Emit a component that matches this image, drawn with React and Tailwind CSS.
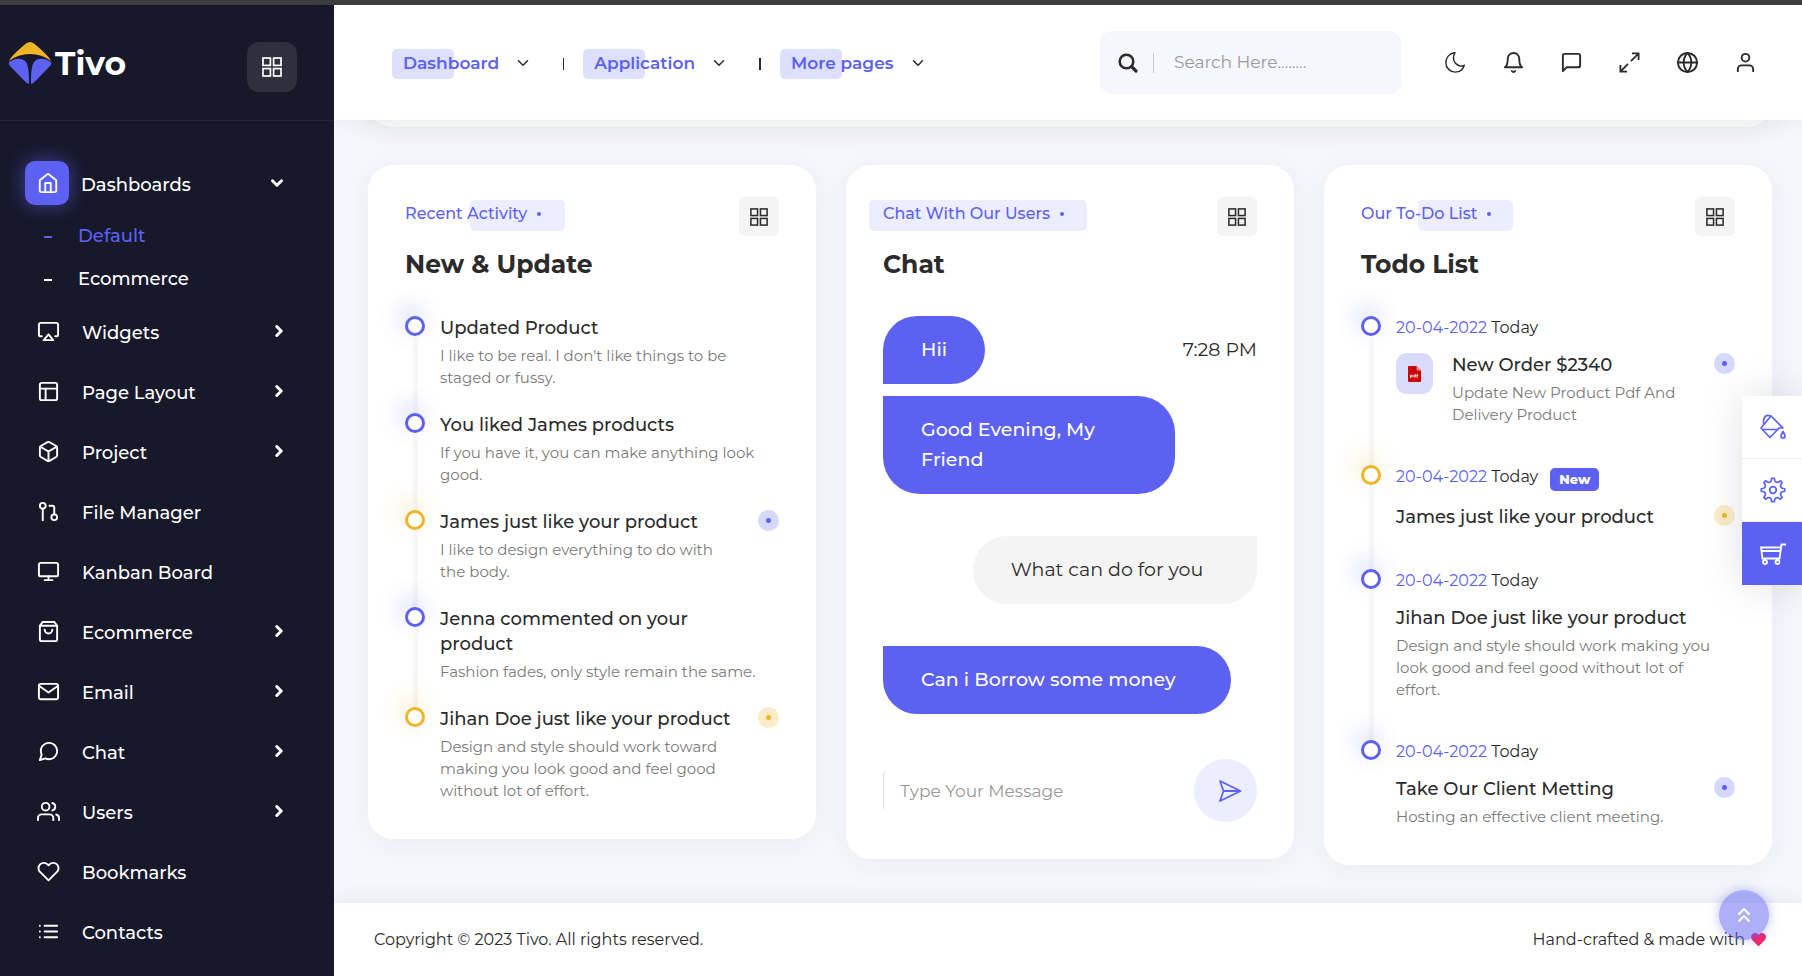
import React from "react";
import {
  FiHome, FiAirplay, FiLayout, FiBox, FiGitPullRequest, FiMonitor, FiShoppingBag, FiMail,
  FiMessageCircle, FiUsers, FiHeart, FiList, FiChevronRight, FiChevronDown, FiBell,
  FiMessageSquare, FiGlobe, FiUser, FiChevronsUp,
} from "react-icons/fi";
import { FaHeart } from "react-icons/fa";

const nav = [
  { label: "Widgets", icon: FiAirplay, more: true },
  { label: "Page Layout", icon: FiLayout, more: true },
  { label: "Project", icon: FiBox, more: true },
  { label: "File Manager", icon: FiGitPullRequest },
  { label: "Kanban Board", icon: FiMonitor },
  { label: "Ecommerce", icon: FiShoppingBag, more: true },
  { label: "Email", icon: FiMail, more: true },
  { label: "Chat", icon: FiMessageCircle, more: true },
  { label: "Users", icon: FiUsers, more: true },
  { label: "Bookmarks", icon: FiHeart },
  { label: "Contacts", icon: FiList },
];

// Outline of an eight-toothed cog centred on (13, 13).
function cogPath() {
  const point = (radius, degrees) => {
    const angle = (degrees * Math.PI) / 180;
    return (13 + radius * Math.cos(angle)).toFixed(2) + " " + (13 + radius * Math.sin(angle)).toFixed(2);
  };
  let path = "";
  for (let tooth = 0; tooth < 8; tooth += 1) {
    const a = tooth * 45;
    path += (tooth === 0 ? "M" : "L") + point(11.8, a - 6) + "L" + point(11.8, a + 6) + "L" + point(9.4, a + 11);
    path += "Q" + point(7.6, a + 22.5) + " " + point(9.4, a + 34);
  }
  return path + "Z";
}

function GridIcon({ className }) {
  return (
    <svg viewBox="0 0 20 20" className={className} fill="none" stroke="currentColor" strokeWidth="1.7" aria-hidden="true">
      <rect x="1" y="1" width="7.400" height="7.400" />
      <rect x="11.600" y="1" width="7.400" height="7.400" />
      <rect x="1" y="11.600" width="7.400" height="7.400" />
      <rect x="11.600" y="11.600" width="7.400" height="7.400" />
    </svg>
  );
}

function Logo() {
  return (
    <a href="#home" className="flex items-center gap-[3px]" aria-label="Tivo">
      <svg viewBox="0 0 44 44" className="size-11" aria-hidden="true">
        <path d="M1 20 Q3 15 18 2.5 Q22 -0.5 26 2.5 Q41 15 43 20 Q34 13 22 13 Q10 13 1 20Z" fill="#f0b429" />
        <path d="M1 21 C7 16.500 15 16.500 18 21 C20.500 25 21 31 21 43 Q19 42.500 16 39.500 L3 26 Q0 23.500 1 21Z" fill="#5c61f2" />
        <path d="M43 21 C37 16.500 29 16.500 26 21 C23.500 25 23 31 23 43 Q25 42.500 28 39.500 L41 26 Q44 23.500 43 21Z" fill="#5c61f2" />
      </svg>
      <span className="text-[33px] leading-[44px] font-bold text-white">Tivo</span>
    </a>
  );
}

function Sidebar() {
  return (
    <aside className="relative z-20 w-[334px] shrink-0 bg-[#17182a] text-white">
      <div className="flex h-[116px] items-center justify-between border-b border-[#262738] pr-[37px] pl-2">
        <Logo />
        <button type="button" aria-label="Toggle sidebar" className="mt-2 flex size-[50px] items-center justify-center rounded-xl bg-[#2e2f3f]">
          <GridIcon className="size-5" />
        </button>
      </div>
      <nav className="pt-8 text-[18px] font-medium">
        <a href="#dashboards" className="flex h-[60px] items-center gap-3 pr-[48px] pl-[25px]">
          <span className="flex size-11 items-center justify-center rounded-[10px] bg-[#5c61f2] pl-0.5 shadow-[0_0_20px_rgba(92,97,242,0.6)]">
            <FiHome className="size-[22px]" />
          </span>
          <span className="grow pt-1">Dashboards</span>
          <FiChevronDown className="size-[18px]" strokeWidth={4} />
        </a>
        <ul className="pt-0.5">
          <li>
            <a href="#default" className="flex h-[43px] items-center gap-[26px] pl-11 text-[#5c61f2]">
              <span className="h-0.5 w-2 bg-current" />Default
            </a>
          </li>
          <li>
            <a href="#ecommerce" className="flex h-[43px] items-center gap-[26px] pl-11">
              <span className="h-0.5 w-2 bg-current" />Ecommerce
            </a>
          </li>
        </ul>
        <ul>
          {nav.map(({ label, icon: Icon, more }) => (
            <li key={label}>
              <a href="#page" className="flex h-[60px] items-center gap-[22px] pr-[46px] pl-[37px]">
                <Icon className="size-[23px]" />
                <span className="grow pt-1">{label}</span>
                {more && <FiChevronRight className="size-[18px]" strokeWidth={4} />}
              </a>
            </li>
          ))}
        </ul>
      </nav>
    </aside>
  );
}

function TopLink({ children }) {
  return (
    <button type="button" className="relative flex items-center gap-[15px] pb-0.5 pl-[11px] text-[17px] leading-7 font-semibold text-[#5c61f2]">
      <span className="absolute inset-y-0 left-0 w-[62px] rounded-[5px] bg-[#dedffc]" />
      <span className="relative">{children}</span>
      <FiChevronDown className="size-[18px] text-[#2b2b2b]" />
    </button>
  );
}

function Header() {
  return (
    <header className="relative z-10 flex h-[115px] items-center bg-white pr-[45px] pl-[58px] shadow-[0_0_20px_rgba(89,102,122,0.1)]">
      <div className="flex items-center gap-[19px] pt-0.5">
        <TopLink>Dashboard</TopLink>
        <span className="ml-3 h-3 w-px bg-[#2b2b2b]" />
        <TopLink>Application</TopLink>
        <span className="ml-3 h-3 w-0.5 bg-[#2b2b2b]" />
        <TopLink>More pages</TopLink>
      </div>
      <div className="ml-auto flex items-center gap-[43px]">
        <label className="flex h-[63px] w-[301px] items-center rounded-xl bg-[#f6f7fc] pl-[18px]">
          <svg viewBox="0 0 20 20" className="size-5 shrink-0" fill="none" stroke="#2b2b2b" strokeLinecap="round" aria-hidden="true">
            <circle cx="8.500" cy="8.500" r="6.800" strokeWidth="2.600" />
            <path d="M13.800 13.800 18 18" strokeWidth="3.200" />
          </svg>
          <span className="mr-5 ml-[15px] h-5 w-px shrink-0 bg-[#c9cad0]" />
          <input type="text" aria-label="Search" placeholder="Search Here........" className="w-full min-w-0 bg-transparent text-[17px] outline-none placeholder:text-[#999999]" />
        </label>
        <div className="flex items-center gap-[35px] text-[#2b2b2b]">
          <button type="button" aria-label="Dark mode">
            <svg viewBox="0 0 22 22" className="size-[23px]" fill="none" stroke="currentColor" strokeWidth="1.400" strokeLinejoin="round" aria-hidden="true">
              <path d="M10.500 1.500C5 2.500 1.800 6.500 1.800 11.200c0 5 4 9 9 9 4 0 7.400-2.600 8.600-6.500-1.800 1-5.800 1.200-8.400-1.900C8.300 8.500 8.800 4.500 10.500 1.500Z" />
            </svg>
          </button>
          <button type="button" aria-label="Notifications"><FiBell className="size-[23px]" /></button>
          <button type="button" aria-label="Messages"><FiMessageSquare className="size-[23px]" /></button>
          <button type="button" aria-label="Full screen">
            <svg viewBox="0 0 24 24" className="size-[23px]" fill="none" stroke="currentColor" strokeWidth="1.900" aria-hidden="true">
              <path d="M14.500 2.500H21.500V9.500M21 3 13.500 10.500M9.500 21.500H2.500V14.500M3 21 10.500 13.500" />
            </svg>
          </button>
          <button type="button" aria-label="Language"><FiGlobe className="size-[23px]" /></button>
          <button type="button" aria-label="Profile"><FiUser className="size-[23px]" /></button>
        </div>
      </div>
    </header>
  );
}

function Card({ label, title, highlight, children }) {
  return (
    <section className="rounded-[25px] bg-white px-[37px] pt-8 pb-[37px] shadow-[0_4px_30px_rgba(46,35,94,0.06)]">
      <div className="flex items-start justify-between">
        <p className="relative flex items-center gap-2.5 text-[16px] leading-[34px] font-medium text-[#5c61f2]">
          <span className={"absolute bottom-0 h-[31px] rounded-[5px] bg-[#ecedfe] " + highlight} />
          <span className="relative">{label}</span>
          <span className="relative size-1 rounded-full bg-current" />
        </p>
        <button type="button" aria-label={title + " options"} className="flex h-[39px] w-10 items-center justify-center rounded-md bg-[#f4f4f4] text-[#2b2b2b]">
          <GridIcon className="size-[18px]" />
        </button>
      </div>
      <h2 className="mt-3 mb-9 text-[25px] leading-8 font-bold text-[#2b2b2b]">{title}</h2>
      {children}
    </section>
  );
}

function TimelineItem({ yellow, last, spaced, children }) {
  return (
    <li className="flex gap-[15px]">
      <div className="flex w-5 shrink-0 flex-col items-center">
        <span
          className={
            "size-5 shrink-0 rounded-full border-3 bg-white " +
            (yellow
              ? "border-[#f0b429] shadow-[-4px_-8px_20px_4px_rgba(240,180,41,0.16)]"
              : "border-[#5c61f2] shadow-[-4px_-8px_20px_4px_rgba(92,97,242,0.16)]")
          }
        />
        {!last && <span className="w-[5px] grow bg-[#f7f7f7]" />}
      </div>
      <div className={"min-w-0 grow " + (last ? "" : spaced ? "pb-[39px]" : "pb-6")}>{children}</div>
    </li>
  );
}

function Lines({ items }) {
  return items.map((line, i) => (
    <React.Fragment key={line}>
      {i > 0 && <br />}
      {line}
    </React.Fragment>
  ));
}

function Entry({ title, text, dot }) {
  return (
    <div className="flex grow items-start justify-between">
      <div>
        <h3 className="text-[18px] leading-[25px] font-medium text-[#2b2b2b]"><Lines items={title} /></h3>
        {text && <p className="mt-1 text-[15px] leading-[22px] text-[#7a7a7a]"><Lines items={text} /></p>}
      </div>
      {dot && (
        <span
          className={
            "flex size-[21px] shrink-0 items-center justify-center rounded-full " +
            (dot === "yellow" ? "bg-[#fbebc9] text-[#f0b429]" : "bg-[#d6d7fc] text-[#5c61f2]")
          }
        >
          <span className="size-[5px] rounded-full bg-current" />
        </span>
      )}
    </div>
  );
}

function TodoDate({ isNew }) {
  return (
    <p className="mb-3.5 flex items-start text-[16px] leading-[23px] text-[#2b2b2b]">
      <span><span className="text-[#5c61f2]">20-04-2022</span> Today</span>
      {isNew && (
        <span className="mt-[3px] ml-3 w-[49px] rounded-[5px] bg-[#5c61f2] text-center text-[13px] leading-[23px] font-extrabold text-white">New</span>
      )}
    </p>
  );
}

function PdfIcon() {
  return (
    <span className="mr-[19px] flex h-[41px] w-[37px] shrink-0 items-center justify-center rounded-[11px] bg-[#dadafc]">
      <svg viewBox="0 0 13 16" className="h-4 w-[13px]" aria-hidden="true">
        <path d="M1 0H8.500L13 4.500V15a1 1 0 0 1-1 1H1a1 1 0 0 1-1-1V1a1 1 0 0 1 1-1Z" fill="#cc0605" />
        <path d="M8.500 0 13 4.500H9.500a1 1 0 0 1-1-1Z" fill="#f08a8a" />
        <path d="M2.500 12V9.200H4.200V10.800H2.500M7.400 8V11H5.700V9.400H7.400M9 12V9q0-.800 1-.800M8.500 9.600H10.200" fill="none" stroke="#fff" strokeWidth=".8" />
      </svg>
    </span>
  );
}

function Chat() {
  const bubble = "px-[38px] py-[19px] ";
  return (
    <Card label="Chat With Our Users" title="Chat" highlight="-left-3.5 w-[218px]">
      <div className="flex flex-col text-[19px] leading-[30px] text-[#2b2b2b]">
        <div className="flex items-center justify-between">
          <p className={bubble + "rounded-[34px] rounded-bl-none bg-[#5c61f2] font-medium text-white"}>Hii</p>
          <time className="text-[#2b2b2b]">7:28 PM</time>
        </div>
        <p className={bubble + "mt-3 w-[78%] rounded-[37px] rounded-tl-none bg-[#5c61f2] font-medium text-white"}>
          Good Evening, My<br />Friend
        </p>
        <p className={bubble + "mt-[42px] w-[76%] self-end rounded-[34px] rounded-tr-none bg-[#f4f4f4]"}>What can do for you</p>
        <p className={bubble + "mt-[42px] w-[93%] rounded-[34px] rounded-tl-none bg-[#5c61f2] font-medium text-white"}>
          Can i Borrow some money
        </p>
      </div>
      <form className="mt-[45px] flex items-center justify-between">
        <input type="text" aria-label="Message" placeholder="Type Your Message" className="h-[41px] min-w-0 grow rounded-[5px] border-l border-[#dddddd] pl-4 text-[17px] outline-none placeholder:text-[#999999]" />
        <button type="button" aria-label="Send" className="flex size-[63px] items-center justify-center rounded-full bg-[#ecedfe] text-[#5c61f2]">
          <svg viewBox="0 0 24 24" className="ml-2 size-6" fill="none" stroke="currentColor" strokeWidth="1.800" strokeLinejoin="round" aria-hidden="true">
            <path d="M2 2 22.500 12 2 22 5.500 12ZM5.500 12H22" />
          </svg>
        </button>
      </form>
    </Card>
  );
}

function SidePanel() {
  const cell = "flex h-[63px] w-full items-center justify-center pl-0.5 ";
  return (
    <div className="absolute top-[396px] right-0 z-20 w-[60px] bg-white text-[#5c61f2] shadow-[0_0_40px_rgba(89,102,122,0.2)]">
      <button type="button" aria-label="Theme colors" className={cell + "border-b border-[#eeeeee]"}>
        <svg viewBox="0 0 26 26" className="size-[26px]" fill="none" stroke="currentColor" strokeWidth="1.700" strokeLinejoin="round" aria-hidden="true">
          <path d="M11 2 23 14H19L10 23.500 1 14Z" />
          <path d="M2.500 15.500H18.500M3.800 11C2.500 5.500 4.500 1.300 8 1.300Q10 1.300 11 2.500" />
          <path d="M23 17.500q-2 3-2 4.500a2 2 0 0 0 4 0q0-1.500-2-4.500Z" />
        </svg>
      </button>
      <button type="button" aria-label="Settings" className={cell + "border-b border-[#eeeeee]"}>
        <svg viewBox="0 0 26 26" className="size-[26px]" fill="none" stroke="currentColor" strokeWidth="1.700" strokeLinejoin="round" aria-hidden="true">
          <circle cx="13" cy="13" r="3.300" />
          <path d={cogPath()} />
        </svg>
      </button>
      <button type="button" aria-label="Cart" className={cell + "bg-[#5c61f2] text-white"}>
        <svg viewBox="0 0 26 22" className="h-[22px] w-[26px]" fill="none" stroke="currentColor" strokeWidth="1.800" aria-hidden="true">
          <path d="M26 1.500H21.500L19.500 15.500H2.500L1 4.500H21M1.500 8H20.500" />
          <circle cx="5" cy="19" r="2" />
          <circle cx="17.500" cy="19" r="2" />
        </svg>
      </button>
    </div>
  );
}

export default function App() {
  return (
    <div className="relative flex min-h-screen flex-col bg-[#f6f7fc] font-['Montserrat','Inter',sans-serif] text-[#2b2b2b]">
      <div className="h-[5px] bg-[#3d3d3d]" />
      <div className="flex grow">
        <Sidebar />
        <div className="flex min-w-0 grow flex-col">
          <Header />
          <main className="grow pr-[30px] pb-[37px] pl-[34px]">
            <div className="-mt-[43px] mb-[38px] h-[50px] rounded-b-[25px] bg-[#f8faf9] shadow-[0_4px_30px_rgba(46,35,94,0.08)]" />
            <div className="grid grid-cols-3 items-start gap-[30px]">
              <Card label="Recent Activity" title="New & Update" highlight="left-[65px] w-[95px]">
                <ul>
                  <TimelineItem><Entry title={["Updated Product"]} text={["I like to be real. I don't like things to be", "staged or fussy."]} /></TimelineItem>
                  <TimelineItem><Entry title={["You liked James products"]} text={["If you have it, you can make anything look", "good."]} /></TimelineItem>
                  <TimelineItem yellow><Entry title={["James just like your product"]} text={["I like to design everything to do with", "the body."]} dot="blue" /></TimelineItem>
                  <TimelineItem><Entry title={["Jenna commented on your", "product"]} text={["Fashion fades, only style remain the same."]} /></TimelineItem>
                  <TimelineItem yellow last><Entry title={["Jihan Doe just like your product"]} text={["Design and style should work toward", "making you look good and feel good", "without lot of effort."]} dot="yellow" /></TimelineItem>
                </ul>
              </Card>
              <Chat />
              <Card label="Our To-Do List" title="Todo List" highlight="left-[57px] w-[95px]">
                <ul>
                  <TimelineItem spaced>
                    <TodoDate />
                    <div className="flex items-start">
                      <PdfIcon />
                      <Entry title={["New Order $2340"]} text={["Update New Product Pdf And", "Delivery Product"]} dot="blue" />
                    </div>
                  </TimelineItem>
                  <TimelineItem yellow spaced><TodoDate isNew /><Entry title={["James just like your product"]} dot="yellow" /></TimelineItem>
                  <TimelineItem spaced><TodoDate /><Entry title={["Jihan Doe just like your product"]} text={["Design and style should work making you", "look good and feel good without lot of", "effort."]} /></TimelineItem>
                  <TimelineItem last><TodoDate /><Entry title={["Take Our Client Metting"]} text={["Hosting an effective client meeting."]} dot="blue" /></TimelineItem>
                </ul>
              </Card>
            </div>
          </main>
          <footer className="flex h-[73px] items-center justify-between bg-white pr-9 pl-10 text-[16px] shadow-[0_0_20px_rgba(89,102,122,0.12)]">
            <p>Copyright © 2023 Tivo. All rights reserved.</p>
            <p className="flex items-center gap-1.5">Hand-crafted &amp; made with <FaHeart className="size-[15px] text-[#f72565]" /></p>
          </footer>
        </div>
      </div>
      <SidePanel />
      <button type="button" aria-label="Back to top" className="absolute right-[33px] bottom-9 z-20 flex size-[50px] items-center justify-center rounded-full bg-[#5c61f2]/50 text-white shadow-[0_0_12px_rgba(92,97,242,0.4)]">
        <FiChevronsUp className="size-6" />
      </button>
    </div>
  );
}
